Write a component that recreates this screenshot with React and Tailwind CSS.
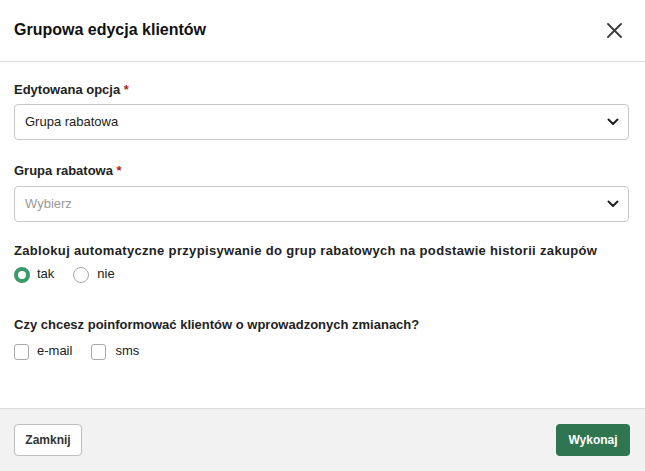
import React from "react";

const Chevron = () => (
  <svg width="12" height="8" viewBox="0 0 12 8" fill="none" className="shrink-0">
    <path d="M1.5 1.5L6 6L10.5 1.5" stroke="#222" strokeWidth="2" strokeLinecap="round" strokeLinejoin="round" />
  </svg>
);

const Select = ({ value, placeholder }) => (
  <div className="h-[36px] w-full rounded-[4px] border border-[#c8c8c8] bg-white flex items-center justify-between pl-[10px] pr-[9px]">
    <span className={value ? "text-[13px] text-[#222]" : "text-[13px] text-[#9a9a9a]"}>{value || placeholder}</span>
    <Chevron />
  </div>
);

const Label = ({ children, required, className = "" }) => (
  <div className={"h-[16px] leading-[16px] text-[13px] font-bold text-[#222] whitespace-nowrap " + className}>
    {children}
    {required && <span className="text-[#b51f1f]"> *</span>}
  </div>
);

export default function App() {
  return (
    <div className="w-[645px] h-[471px] bg-white flex flex-col" style={{ fontFamily: '"Liberation Sans", Arial, sans-serif' }}>
      <div className="h-[62px] shrink-0 border-b border-[#dcdcdc] flex items-center justify-between pl-[14px] pr-[23px]">
        <h1 className="text-[16px] font-bold text-[#111] leading-none -mt-[1px]">Grupowa edycja klientów</h1>
        <svg width="15" height="15" viewBox="0 0 15 15" fill="none" className="-mt-[1px]">
          <path d="M1 1L14 14M14 1L1 14" stroke="#3a3a3a" strokeWidth="1.8" strokeLinecap="round" />
        </svg>
      </div>

      <div className="flex-1 px-[14px] pt-[20px] flex flex-col">
        <Label required>Edytowana opcja</Label>
        <div className="mt-[6px] mr-[2px]">
          <Select value="Grupa rabatowa" />
        </div>

        <div className="mt-[23px]">
          <Label required>Grupa rabatowa</Label>
        </div>
        <div className="mt-[7px] mr-[2px]">
          <Select placeholder="Wybierz" />
        </div>

        <div className="mt-[21px]">
          <Label className="tracking-[0.33px]">Zablokuj automatyczne przypisywanie do grup rabatowych na podstawie historii zakupów</Label>
        </div>
        <div className="mt-[8px] flex items-start h-[16px]">
          <div className="w-[16px] h-[16px] rounded-full border-[4px] border-[#3a9a6a] bg-white shrink-0"></div>
          <span className="ml-[7px] text-[13px] leading-[14px] text-[#222]">tak</span>
          <div className="ml-[19px] w-[16px] h-[16px] rounded-full border border-[#a8a8a8] bg-white shrink-0"></div>
          <span className="ml-[8px] text-[13px] leading-[14px] text-[#222]">nie</span>
        </div>

        <div className="mt-[34px]">
          <Label>Czy chcesz poinformować klientów o wprowadzonych zmianach?</Label>
        </div>
        <div className="mt-[11px] flex items-start h-[16px]">
          <div className="w-[15px] h-[16px] rounded-[3px] border border-[#a8a8a8] bg-white shrink-0"></div>
          <span className="ml-[8px] text-[13px] leading-[14px] text-[#222]">e-mail</span>
          <div className="ml-[19px] w-[15px] h-[16px] rounded-[3px] border border-[#a8a8a8] bg-white shrink-0"></div>
          <span className="ml-[9px] text-[13px] leading-[14px] text-[#222]">sms</span>
        </div>
      </div>

      <div className="h-[63px] shrink-0 border-t border-[#dcdcdc] bg-[#f2f2f2] flex items-center justify-between pl-[14px] pr-[15px]">
        <button className="h-[32px] w-[68px] rounded-[4px] border border-[#bdbdbd] bg-white text-[12px] font-bold text-[#333]">Zamknij</button>
        <button className="h-[32px] w-[74px] rounded-[4px] bg-[#2e7550] text-[12px] font-bold text-white">Wykonaj</button>
      </div>
    </div>
  );
}
